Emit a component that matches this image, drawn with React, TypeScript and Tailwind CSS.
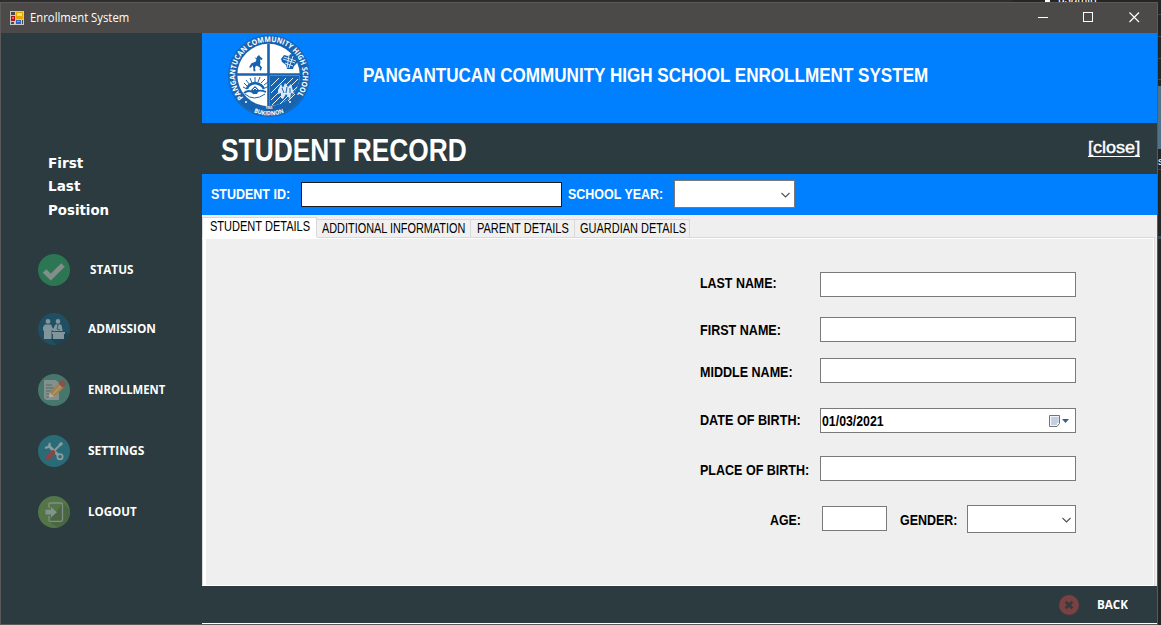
import { useLayoutEffect, useRef, useState, type ReactNode } from "react";

const narrow = "font-['Liberation_Sans_Narrow','Liberation_Sans',sans-serif]";
const segoe = "font-['Open_Sans','Noto_Sans',sans-serif]";

/* Text condensed or widened to occupy an exact width. */
function Fit({ w, className = "", children }: { w: number; className?: string; children: ReactNode }) {
  const ref = useRef<HTMLSpanElement>(null);
  const [scale, setScale] = useState(1);
  useLayoutEffect(() => {
    if (ref.current) setScale(w / ref.current.offsetWidth);
  }, [w]);
  return (
    <span className={`block shrink-0 ${className}`} style={{ width: w }}>
      <span ref={ref} className="inline-block origin-left whitespace-nowrap align-top" style={{ transform: `scaleX(${scale})` }}>
        {children}
      </span>
    </span>
  );
}

function AppIcon() {
  return (
    <svg className="h-[14px] w-[14px] shrink-0" viewBox="0 0 14 14" shapeRendering="crispEdges">
      <path fill="#c9c9c9" d="M0 0h14v14H0z" />
      <path fill="#4b4a48" d="M1 1h4v3H1zM1 11h3v2H1zM12 9h1v4h-1z" />
      <path fill="#e9a800" d="M6 1h7v7H6z" />
      <path fill="#ffe070" d="M7 2h5v3H7z" />
      <path fill="#b01515" d="M1 5h4v5H1z" />
      <path fill="#e86050" d="M2 6h2v2H2z" />
      <path fill="#2f62c0" d="M6 9h5v4H6z" />
      <path fill="#79a8f0" d="M7 10h3v1H7z" />
    </svg>
  );
}

function Seal() {
  return (
    <svg className="h-[84px] w-[84px] shrink-0" viewBox="0 0 84 84">
      <defs>
        <path id="sealTop" d="M16.400 63.600A33.800 33.800 0 1 1 67.600 63.600" />
        <path id="sealBottom" d="M15 70.700A39.500 39.500 0 0 0 69 70.700" />
      </defs>
      <circle cx="42" cy="42" r="41" fill="#1763b0" />
      <circle cx="42" cy="42" r="39.800" fill="none" stroke="#1c70c4" strokeWidth="1" />
      <circle cx="41.500" cy="41" r="31.200" fill="#fff" />
      <path d="M43 42h29.700A31 31 0 0 1 43 72z" fill="#1763b0" />
      <path d="M41.500 10v62M10 40.500h63" stroke="#1763b0" strokeWidth="2.600" />
      <path d="m32 21 1.500 2 2 1.500-.5 1.500-2-.5.500 3-.5 2.500 2 2.500-1 3-1.500-.3.500-2.500-2-1.500-2-.5-1 2 .5 3.500h-2l-.2-3.500-.8-2.500-1.500 2.500-2-.5 2.500-4 4-1.500 1-2-2-2.500 2 1 .5-1.500z" fill="#1763b0" />
      <path d="m54 25 3-4 4 1 3-2 4 1 3 3-1 5-3 3-1 3h-6l-1-4-4-3z" fill="#1763b0" />
      <path d="m57 23 12 4m-13-2 12 4m-10 0 8 3m-4-11-2 13m6-12-4 12" stroke="#fff" strokeWidth=".8" />
      <g stroke="#1763b0" strokeWidth="1" fill="none">
        <path d="m20 55-4-2m5 0-4-4m6 2-4-5m6 3-2-5m5 4v-5m3 5 2-5m1 6 4-4m-1 6 4-3m-3 6 4-2" />
        <path d="M20 55q1-5 8-6 7 1 9 6" strokeWidth="2.500" />
        <path d="M17 59q5-4 10 0q5-4 12-1" strokeWidth="1.800" />
        <path d="M18 60q9 8 20 0" strokeWidth="1" />
      </g>
      <path d="m24 56 4-4 4 4-2 4h-4z" fill="#1763b0" />
      <path d="m26 56 2-2 2 2" fill="none" stroke="#fff" strokeWidth="1" />
      <path d="M44 52l8-8m-8 15 15-15M44 66l22-22M45 71l26-26M53 70l17-17M61 67l7-7" stroke="#fff" strokeWidth=".9" />
      <path d="m51 56 3-6 2 4 2-5 3 4 3-3 3 10-3-1-1 6-4-5-3 5-2-1v-5l-3 1z" fill="#dbe8f5" />
      <path d="m55 54 2 5m3-6-1 6m4-5v5" stroke="#1763b0" strokeWidth="1" />
      <text className="font-['Open_Sans',sans-serif] text-[7.5px] font-bold" fill="#fff">
        <textPath href="#sealTop" textLength="150" lengthAdjust="spacingAndGlyphs">PANGANTUCAN COMMUNITY HIGH SCHOOL</textPath>
      </text>
      <text className="font-['Open_Sans',sans-serif] text-[6px] font-bold" fill="#fff">
        <textPath href="#sealBottom" startOffset="14" textLength="31" lengthAdjust="spacingAndGlyphs">BUKIDNON</textPath>
      </text>
      <text x="42" y="74.800" textAnchor="middle" className="font-['Open_Sans',sans-serif] text-[3px] font-bold" fill="#fff">1965</text>
      <circle cx="19" cy="68" r="1" fill="#fff" />
      <circle cx="63" cy="68" r="1" fill="#fff" />
    </svg>
  );
}

const StatusIcon = () => (
  <svg className="h-8 w-8 shrink-0" viewBox="0 0 32 32">
    <circle cx="16" cy="16" r="16" fill="#2d7654" />
    <path d="m6.500 17 6.300 6 12.200-12" fill="none" stroke="#808f8a" strokeWidth="5" />
  </svg>
);

const AdmissionIcon = () => (
  <svg className="h-8 w-8 shrink-0" viewBox="0 0 32 32">
    <circle cx="16" cy="16" r="16" fill="#204f63" />
    <path d="m12 26 15-7 4 2a16 16 0 0 1-12 11z" fill="#1f4353" />
    <g fill="#81959c">
      <circle cx="10" cy="8.400" r="2.400" />
      <path d="M7 11.500h6l1.500 3.500 3 2-.8 1.400-3.200-1.200V26H6v-8l-1-1v-3z" />
      <circle cx="20" cy="8.400" r="2.300" />
      <path d="m17 12 2-1 1 2 1-2 2.500 1 1.200 6H17l-2-1.500z" />
      <path d="M14 19h13v2h-1v5H15v-5h-1z" />
    </g>
    <path d="m20 12-1 4 3 1" fill="none" stroke="#204f63" strokeWidth=".8" />
  </svg>
);

const EnrollIcon = () => (
  <svg className="h-8 w-8 shrink-0" viewBox="0 0 32 32">
    <circle cx="16" cy="16" r="16" fill="#47776c" />
    <path d="M6 6h12l3 3v17H8l-2-2z" fill="#83908c" />
    <path d="M8 11h6m-6 3h8m-8 3h7m-7 3h4m-4 3h4" stroke="#536b68" strokeWidth="1" />
    <path d="m11.500 18.500 10-10 5 4.500-10 9.500-5.500 1z" fill="#a08152" />
    <path d="m15 20 10-10" stroke="#b59a65" strokeWidth="1.300" />
    <path d="m20.500 9.500 2.500-3 2-.4 3 3-.5 2-2.500 2.800z" fill="#8c504b" />
    <path d="m11.500 18.500 5 4-5.700 1.200z" fill="#adaba0" />
  </svg>
);

const SettingsIcon = () => (
  <svg className="h-8 w-8 shrink-0" viewBox="0 0 32 32">
    <circle cx="16" cy="16" r="16" fill="#296b76" />
    <g fill="none" stroke="#8c9b9d">
      <path d="m11 11 9 9" strokeWidth="2.800" />
      <path d="M11.500 7.800a3.500 3.500 0 0 1-4.500 4.500" strokeWidth="2.300" />
      <circle cx="22" cy="21.800" r="2.600" strokeWidth="1.800" />
      <path d="m16 16 6.500-6.500" strokeWidth="1.800" />
      <path d="m21.500 10.500 2.600-2.800" strokeWidth="2.800" />
    </g>
    <path d="m15 17.500-5 5.300" stroke="#8d4444" strokeWidth="4.600" strokeLinecap="round" />
  </svg>
);

const LogoutIcon = () => (
  <svg className="h-8 w-8 shrink-0" viewBox="0 0 32 32">
    <circle cx="16" cy="16" r="16" fill="#547547" />
    <path d="m25 7 6.500 6.500a16 16 0 0 1-11.500 18l-9-6z" fill="#4a6642" />
    <path d="M11 12V8q0-1 1-1h11q1.500 0 1.500 1.500v15.300q0 1.500-1.500 1.500H12q-1 0-1-1V20" fill="none" stroke="#7f8f88" strokeWidth="1.300" />
    <path d="M7.500 13.700H13V11l6 5.200-6 5.100v-2.700H7.500z" fill="#82938c" />
  </svg>
);

const Chevron = () => (
  <svg className="h-[6px] w-[9px]" viewBox="0 0 9 6">
    <path d="m.5 1 4 4 4-4" fill="none" stroke="#505050" strokeWidth="1.100" />
  </svg>
);

const nav = [
  { label: "STATUS", w: 43, icon: <StatusIcon />, pad: "pl-5", gap: "mt-0" },
  { label: "ADMISSION", w: 68, icon: <AdmissionIcon />, pad: "pl-[18px]", gap: "mt-[27px]" },
  { label: "ENROLLMENT", w: 77, icon: <EnrollIcon />, pad: "pl-[18px]", gap: "mt-[29px]" },
  { label: "SETTINGS", w: 56, icon: <SettingsIcon />, pad: "pl-[18px]", gap: "mt-[29px]" },
  { label: "LOGOUT", w: 49, icon: <LogoutIcon />, pad: "pl-[18px]", gap: "mt-[29px]" },
];

function Sidebar() {
  return (
    <aside className="w-[201px] shrink-0 bg-[#2b3b3f] pl-[37px] pt-[119px] text-white">
      <div className="pl-[10px] font-['DejaVu_Sans','Noto_Sans',sans-serif] text-[14px] font-bold leading-[22px]">
        <Fit w={35}>First</Fit>
        <Fit w={32} className="mt-px">Last</Fit>
        <Fit w={61} className="mt-[2px]">Position</Fit>
      </div>
      <nav className={`mt-[33px] ${segoe} text-[12px] font-bold leading-4`}>
        {nav.map((n) => (
          <div key={n.label} className={`flex h-8 items-center ${n.gap}`}>
            {n.icon}
            <span className={n.pad}>
              <Fit w={n.w}>{n.label}</Fit>
            </span>
          </div>
        ))}
      </nav>
    </aside>
  );
}

function Row({ label, w, gap, labelTop, children }: { label: string; w: number; gap: string; labelTop: string; children?: ReactNode }) {
  return (
    <div className={`flex h-[25px] ${gap}`}>
      <div className="w-[120px] shrink-0">
        <Fit w={w} className={labelTop}>{label}</Fit>
      </div>
      <div className="flex w-[256px] items-center border border-[#7a7a7a] bg-white">{children}</div>
    </div>
  );
}

function StudentForm() {
  return (
    <div className={`ml-[494px] pt-[33px] ${narrow} text-[15.5px] font-bold leading-4 text-black`}>
      <Row label="LAST NAME:" w={77} gap="mt-0" labelTop="pt-[3px]" />
      <Row label="FIRST NAME:" w={81} gap="mt-5" labelTop="pt-[5px]" />
      <Row label="MIDDLE NAME:" w={93} gap="mt-4" labelTop="pt-[6px]" />
      <Row label="DATE OF BIRTH:" w={101} gap="mt-[25px]" labelTop="pt-1">
        <Fit w={62} className="pl-px">01/03/2021</Fit>
        <svg className="ml-auto mr-[4px] mt-px h-[13px] w-[22px]" viewBox="0 0 22 13">
          <path d="M.5.500h10v8l-2.500 3H.5z" fill="#f3f5fa" stroke="#77736f" />
          <path d="M2.500 3h6.500M2.500 5h6.500M2.500 7h6.500M2.500 9h5M3 2v8M5 2v8M7 2v8M9 2v6" stroke="#a9b9d6" strokeWidth=".8" />
          <path d="M13 4h7l-3.500 4z" fill="#3b5c92" />
        </svg>
      </Row>
      <Row label="PLACE OF BIRTH:" w={109} gap="mt-[23px]" labelTop="pt-[6px]" />
      <div className="mt-6 flex h-7 items-start pl-[70px]">
        <Fit w={31} className="pt-[7px]">AGE:</Fit>
        <div className="ml-[21px] mt-px h-[25px] w-[65px] border border-[#7a7a7a] bg-white" />
        <Fit w={57} className="ml-[13px] pt-[7px]">GENDER:</Fit>
        <div className="ml-[10px] flex h-7 w-[109px] items-center justify-end border border-[#7a7a7a] bg-white pr-1 pt-px">
          <Chevron />
        </div>
      </div>
    </div>
  );
}

const tabs = [
  { label: "ADDITIONAL INFORMATION", w: 143, box: "w-[154px] pl-[5px]" },
  { label: "PARENT DETAILS", w: 92, box: "w-[104px] pl-[6px]" },
  { label: "GUARDIAN DETAILS", w: 106, box: "w-[115px] pl-[5px]" },
];

function TabStrip() {
  return (
    <div className={`flex h-[22px] shrink-0 items-end bg-[#efefef] ${narrow} text-[14px] leading-4 text-black`}>
      <div className="h-[20px] w-[115px] border border-b-0 border-[#d9d9d9] bg-white pl-[7px]">
        <Fit w={100}>STUDENT DETAILS</Fit>
      </div>
      {tabs.map((t) => (
        <div key={t.label} className={`h-[18px] border-r border-t border-[#d9d9d9] bg-[#f0f0f0] ${t.box}`}>
          <Fit w={t.w}>{t.label}</Fit>
        </div>
      ))}
    </div>
  );
}

function Main() {
  return (
    <main className="flex w-[955px] shrink-0 flex-col bg-[#efefef]">
      <header className="flex h-[90px] shrink-0 bg-[#0080ff] pl-[25px] pt-px">
        <Seal />
        <Fit w={565} className={`ml-[52px] pt-[31px] ${narrow} text-[21px] font-bold leading-5 text-white`}>
          PANGANTUCAN COMMUNITY HIGH SCHOOL ENROLLMENT SYSTEM
        </Fit>
      </header>
      <div className="flex h-[51px] shrink-0 justify-between bg-[#2b3b3f] pl-[19px] pr-[17px] text-white">
        <Fit w={246} className={`pt-[11px] ${narrow} text-[32px] font-bold leading-8`}>STUDENT RECORD</Fit>
        <a className="mt-4 h-[18px] border-b border-white font-['Liberation_Sans',sans-serif] text-[17px] leading-[18px] [-webkit-text-stroke:0.4px_white]">
          <Fit w={52}>[close]</Fit>
        </a>
      </div>
      <div className={`flex h-[41px] shrink-0 bg-[#0080ff] pl-[9px] ${narrow} text-[15.5px] font-bold leading-4 text-white`}>
        <Fit w={79} className="pt-3">STUDENT ID:</Fit>
        <div className="ml-[11px] mt-2 h-[25px] w-[261px] border border-[#1c1c1c] bg-white" />
        <Fit w={95} className="ml-[6px] pt-3">SCHOOL YEAR:</Fit>
        <div className="ml-[11px] mt-[6px] flex h-7 w-[121px] items-center justify-end border border-[#7a7a7a] bg-white pr-1 pt-px">
          <Chevron />
        </div>
      </div>
      <TabStrip />
      <section className="mr-[2px] h-[349px] shrink-0 border-r border-[#d9d9d9]">
        <div className="flex h-px bg-[#d9d9d9]">
          <span className="ml-px w-[114px] bg-white" />
        </div>
        <div className="h-[348px] border border-l-0 border-white bg-[#efefef]">
          <div className="h-full border-l border-[#d9d9d9]">
            <div className="h-full border-l-[3px] border-white">
              <StudentForm />
            </div>
          </div>
        </div>
      </section>
      <footer className={`flex h-[37px] shrink-0 items-center justify-end bg-[#2b3b3f] pr-[29px] ${segoe} text-[12px] font-bold leading-4 text-white`}>
        <svg className="mr-[18px] h-5 w-5" viewBox="0 0 20 20">
          <circle cx="10" cy="10" r="10" fill="#7a4042" />
          <path d="m6.700 6.700 6.600 6.600m0-6.600-6.600 6.600" stroke="#343a3e" strokeWidth="2.700" />
        </svg>
        <Fit w={31}>BACK</Fit>
      </footer>
      <div className="h-px bg-white" />
    </main>
  );
}

function BackgroundEdge() {
  return (
    <div className="flex w-[3px] shrink-0 flex-col overflow-hidden bg-[#252526] pt-3">
      <div className="h-[22px] shrink-0 border-t border-[#464646]" />
      <div className="h-[22px] shrink-0 border-t border-[#464646]" />
      <div className="h-[21px] shrink-0 border-t border-[#464646]" />
      <div className="h-[7px] shrink-0 border-t border-[#464646]" />
      <div className="h-[63px] shrink-0 bg-[#537287]" />
      <div className="h-[21px] shrink-0 border-b border-[#464646] font-['Liberation_Sans',sans-serif] text-[11px] leading-6 text-white">s</div>
      <div className="h-[66px] shrink-0" />
      <div className="h-[3px] shrink-0 bg-[#3e4a56]" />
      <div className="h-[40px] shrink-0" />
    </div>
  );
}

export default function App() {
  return (
    <div className="flex h-[625px] w-[1161px] flex-col overflow-hidden bg-[#252526]">
      <div className="flex h-[2px] shrink-0 overflow-hidden bg-[#2d2d30]">
        <div className="ml-[1012px] flex w-[149px] bg-[#252526]">
          <span className="ml-[33px] h-[2px] w-[5px] bg-white" />
          <span className="-mt-[7px] ml-[8px] font-['Liberation_Sans',sans-serif] text-[12px] leading-3 text-white">usamin</span>
        </div>
      </div>
      <div className="flex h-[623px]">
        <div className="w-[1158px] shrink-0 border border-[#5c5a59]">
          <div className="flex h-[30px] items-center bg-[#4b4a48] pl-[9px] text-white">
            <AppIcon />
            <Fit w={99} className={`ml-[6px] ${segoe} text-[12px] leading-4`}>Enrollment System</Fit>
            <svg className="ml-auto mr-[16px] mb-[2px] h-[12px] w-[103px]" viewBox="0 0 103 12" fill="none" stroke="#fff">
              <path d="M0 6.500h10M45.500 1.500h9v9h-9z" shapeRendering="crispEdges" />
              <path d="m91.500 1.500 9.500 9.500m0-9.500-9.500 9.500" strokeWidth="1.200" />
            </svg>
          </div>
          <div className="flex h-[591px]">
            <Sidebar />
            <Main />
          </div>
        </div>
        <BackgroundEdge />
      </div>
    </div>
  );
}
